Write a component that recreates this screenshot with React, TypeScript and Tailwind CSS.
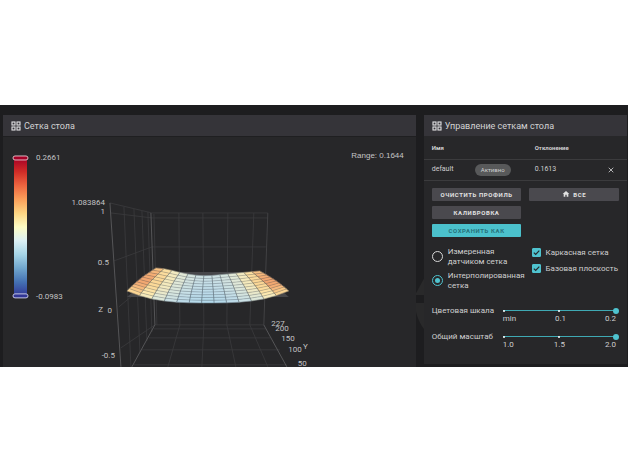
import React, { useState } from 'react';
import { X } from 'lucide-react';
import { MdHome } from 'react-icons/md';

const COLS = 13;
const ROWS = 10;

// RdYlBu stops, used from the lowest to the highest point of the mesh
const PALETTE = [
  [172, 214, 236],
  [198, 223, 232],
  [226, 233, 215],
  [253, 234, 176],
  [250, 208, 140],
  [242, 166, 112],
];

const getColor = (value: number) => {
  const pos = Math.max(0, Math.min(0.999, value)) * (PALETTE.length - 1);
  const i = Math.floor(pos);
  const f = pos - i;
  const c = PALETTE[i].map((v, k) => Math.round(v + (PALETTE[i + 1][k] - v) * f));
  return `rgb(${c[0]},${c[1]},${c[2]})`;
};

// u runs from left to right (-1..1), t from the back edge to the front edge (0..1)
const project = (u: number, t: number) => {
  const a = Math.abs(u);
  const x = 208 + u * (52 + 29 * t + 2 * Math.sin(Math.PI * t));
  const backY = u < 0 ? 276 - 8 * Math.sin((Math.PI / 2) * a * a) : 276 - 5 * a;
  const frontY = 303 - 12 * a * a * a;
  return [x, backY + (frontY - backY) * t];
};

const buildCells = () => {
  const cells = [];
  for (let r = 0; r < ROWS; r++) {
    for (let c = 0; c < COLS; c++) {
      const u0 = -1 + (2 * c) / COLS;
      const u1 = -1 + (2 * (c + 1)) / COLS;
      const t0 = r / ROWS;
      const t1 = (r + 1) / ROWS;
      const u = (u0 + u1) / 2;
      const points = [project(u0, t0), project(u1, t0), project(u1, t1), project(u0, t1)];
      const edge = 0.74 + 0.26 * Math.sin(Math.PI * t0);
      const value = 0.24 - 0.2 * t0 + edge * Math.pow(Math.abs(u), 2);
      cells.push({
        id: `${r}-${c}`,
        points: points.map((p) => p.map((n) => n.toFixed(1)).join(',')).join(' '),
        fill: getColor(value),
      });
    }
  }
  return cells;
};

const toPath = (points: number[][]) => 'M' + points.map((p) => p.map((n) => n.toFixed(1)).join(' ')).join('L');

const steps = (count: number) => Array.from({ length: count + 1 }, (_, i) => i / count);

const cells = buildCells();
const columnLines = steps(COLS).map((c) => toPath(steps(ROWS).map((t) => project(c * 2 - 1, t))));
const rowLines = steps(ROWS).map((t) => toPath(steps(COLS).map((c) => project(c * 2 - 1, t))));

const labels = [
  { text: '1.083864', x: 105, y: 205 },
  { text: '1', x: 105, y: 214 },
  { text: '0.5', x: 109, y: 265 },
  { text: 'Z', x: 103, y: 312 },
  { text: '0', x: 112, y: 313 },
  { text: '-0.5', x: 115, y: 358 },
  { text: '227', x: 285, y: 326 },
  { text: '200', x: 289, y: 331 },
  { text: '150', x: 295, y: 341 },
  { text: '100', x: 302, y: 352 },
  { text: 'Y', x: 308, y: 349 },
  { text: '50', x: 307, y: 366 },
];

const GridIcon: React.FC = () => (
  <svg viewBox="0 0 10 10" className="size-[10px] shrink-0" fill="none" stroke="#e4e4e6" strokeWidth="1.1">
    <rect x="1" y="1" width="3" height="3" />
    <rect x="6" y="1" width="3" height="3" />
    <rect x="1" y="6" width="3" height="3" />
    <rect x="6" y="6" width="3" height="3" />
  </svg>
);

const CardHeader: React.FC<{ title: string }> = ({ title }) => (
  <header className="flex h-[21px] items-center gap-[3px] bg-[#353439] px-2">
    <GridIcon />
    <h2 className="text-[9px] leading-3 text-[#d2d2d3]">{title}</h2>
  </header>
);

const MeshChart: React.FC = () => (
  <svg viewBox="3 137 413 230" className="block w-full" role="img" aria-label="Сетка стола">
    <defs>
      <linearGradient id="scale" x1="0" y1="0" x2="0" y2="1">
        <stop offset="0" stopColor="#a50026" />
        <stop offset="0.1" stopColor="#d02c27" />
        <stop offset="0.2" stopColor="#ee6540" />
        <stop offset="0.3" stopColor="#fb9f5a" />
        <stop offset="0.4" stopColor="#fdd582" />
        <stop offset="0.5" stopColor="#fdfcc4" />
        <stop offset="0.6" stopColor="#dcf0f4" />
        <stop offset="0.7" stopColor="#a6d5e7" />
        <stop offset="0.8" stopColor="#70a6cd" />
        <stop offset="0.9" stopColor="#4471b3" />
        <stop offset="1" stopColor="#313695" />
      </linearGradient>
    </defs>

    <rect x="14" y="158" width="13" height="138" fill="url(#scale)" />
    <rect x="13" y="156" width="15" height="4" rx="2" fill="#a50026" stroke="#dcb9c2" strokeWidth="1" />
    <rect x="13" y="294" width="15" height="4" rx="2" fill="#313695" stroke="#c5c6e2" strokeWidth="1" />

    <g fill="none" stroke="#3b3b3d" strokeWidth="0.8">
      <path d="M110 203L152 213H268M111 213L152 218H268M114 261L152 247H266M119 307L156 276M121 348L155 325" />
      <path d="M124 207L131 367M134 209L140 352M142 211L147 341M148 212L152 332" />
      <path d="M154 214L157 325M179 213L180 325L168 367M203 213L204 325L202 367M228 213L227 325L236 367M254 213L250 325L268 367" />
      <path d="M155 325H264M154 329H266M149 338H271M142 350H280M134 365H287" />
    </g>
    <g fill="none" stroke="#5a5a5c" strokeWidth="0.9">
      <path d="M110 203L121 367M151 213L155 325L132 367M264 325L287 367" />
      <path d="M268 213L264 325" stroke="#444446" />
    </g>

    <path d="M157 272H262L289 297H127Z" fill="#47474a" />
    {cells.map((cell) => (
      <polygon key={cell.id} points={cell.points} fill={cell.fill} stroke={cell.fill} strokeWidth="0.4" />
    ))}
    <g fill="none" stroke="#37424c" strokeWidth="0.5">
      {rowLines.map((d) => (
        <path key={d} d={d} strokeOpacity="0.5" />
      ))}
      {columnLines.map((d) => (
        <path key={d} d={d} strokeOpacity="0.9" />
      ))}
    </g>

    <g fill="#c4c4c5" fontSize="8">
      <text x="36" y="160">0.2661</text>
      <text x="36" y="299">-0.0983</text>
      {labels.map((label) => (
        <text key={label.text} x={label.x} y={label.y} textAnchor="end">{label.text}</text>
      ))}
      <text x="404" y="158" textAnchor="end" fontFamily="Liberation Sans, sans-serif">Range: 0.1644</text>
    </g>
  </svg>
);

const RadioOption: React.FC<{ label: string; checked: boolean; onChange: () => void }> = ({ label, checked, onChange }) => (
  <label className="flex items-center gap-[5px] text-[8px] leading-[10px]">
    <span className="grid shrink-0 place-items-center">
      <input
        type="radio"
        name="mesh"
        checked={checked}
        onChange={onChange}
        className="col-start-1 row-start-1 size-[11px] appearance-none rounded-full border border-[#d8d8d8] checked:border-[#4fc3cf]"
      />
      {checked && <span className="pointer-events-none col-start-1 row-start-1 size-[5px] rounded-full bg-[#4fc3cf]" />}
    </span>
    <span className="w-[76px]">{label}</span>
  </label>
);

const CheckOption: React.FC<{ label: string }> = ({ label }) => (
  <label className="flex items-center gap-[5px] text-[8px] leading-[10px] whitespace-nowrap">
    <span className="grid shrink-0 place-items-center">
      <input
        type="checkbox"
        defaultChecked
        className="peer col-start-1 row-start-1 size-[9px] appearance-none rounded-[1px] border border-[#4fc3cf] checked:bg-[#4fc3cf]"
      />
      <svg viewBox="0 0 9 9" className="pointer-events-none invisible col-start-1 row-start-1 size-[9px] peer-checked:visible">
        <path d="M1.8 4.6L3.7 6.5L7.3 2.6" fill="none" stroke="#24282b" strokeWidth="1.2" />
      </svg>
    </span>
    <span>{label}</span>
  </label>
);

const SliderRow: React.FC<{ id: string; label: string; marks: string[] }> = ({ id, label, marks }) => (
  <div className="flex gap-2">
    <label htmlFor={id} className="w-[63px] shrink-0 text-[8px] leading-[10px] whitespace-nowrap">{label}</label>
    <div className="min-w-0 flex-1 pt-[2px]">
      <div className="grid grid-cols-1 items-center">
        <div className="col-start-1 row-start-1 flex h-px items-center justify-between bg-[#3fa9b3]">
          <span className="size-[2px] rounded-full bg-white" />
          <span className="size-[2px] rounded-full bg-white" />
          <span className="size-[2px] rounded-full bg-white" />
        </div>
        <input
          id={id}
          type="range"
          min="0"
          max="100"
          defaultValue="100"
          className="col-start-1 row-start-1 h-[6px] w-[calc(100%+3px)] min-w-0 appearance-none bg-transparent [&::-webkit-slider-thumb]:size-[6px] [&::-webkit-slider-thumb]:appearance-none [&::-webkit-slider-thumb]:rounded-full [&::-webkit-slider-thumb]:bg-[#4fc3cf]"
        />
      </div>
      <div className="flex justify-between text-[8px] leading-[10px]">
        {marks.map((mark) => (
          <span key={mark}>{mark}</span>
        ))}
      </div>
    </div>
  </div>
);

const buttonClass =
  'flex h-[13px] w-full items-center justify-center gap-[3px] rounded-[1px] bg-[#4a494e] text-[6px] leading-[13px] font-bold tracking-widest text-[#e2e2e2] uppercase';

export default function App() {
  const [mesh, setMesh] = useState('interpolated');

  return (
    <div className="bg-white py-[105px] font-[Roboto,sans-serif]">
      <main className="relative grid grid-cols-[67fr_33fr] items-start gap-2 bg-[#1d1d1f] pt-[10px] pr-px pl-[3px] text-[#cfcfd0]">
        {/* background logo, only seen between the two cards */}
        <svg viewBox="0 0 80 80" className="absolute right-[133px] bottom-[22px] size-[80px]" fill="#29292a">
          <path d="M12 8L24 30H0Z" />
          <path d="M0 38H80C80 60 62 80 40 80C18 80 0 60 0 38Z" />
        </svg>

        <section className="relative min-w-0 bg-[#272729]">
          <CardHeader title="Сетка стола" />
          <div className="border-t border-[#1f1f21]">
            <MeshChart />
          </div>
        </section>

        <section className="relative min-w-0 bg-[#272729] pb-[14px]">
          <CardHeader title="Управление сеткам стола" />
          <table className="w-full table-fixed text-left">
            <thead>
              <tr className="h-[23px] border-b border-[#3b3b3d] text-[6px]">
                <th className="w-[51px] pl-2 font-bold">Имя</th>
                <th className="w-[54px]" />
                <th className="pl-[6px] font-bold">Отклонение</th>
                <th className="w-[20px]" />
              </tr>
            </thead>
            <tbody>
              <tr className="h-[21px] border-b border-[#3b3b3d] text-[7px]">
                <td className="pl-2">default</td>
                <td>
                  <span className="block w-[36px] rounded-full bg-[#58595a] text-center text-[6px] leading-[12px]">Активно</span>
                </td>
                <td className="pl-[6px]">0.1613</td>
                <td>
                  <button type="button" aria-label="Удалить" className="block">
                    <X size={8} strokeWidth={2.5} />
                  </button>
                </td>
              </tr>
            </tbody>
          </table>

          <div className="grid grid-cols-2 items-start gap-2 px-2 pt-[7px]">
            <div className="flex flex-col gap-[5px]">
              <button type="button" className={buttonClass}>Очистить профиль</button>
              <button type="button" className={buttonClass}>Калибровка</button>
              <button
                type="button"
                className="h-[13px] w-full rounded-[1px] bg-[#4bc1cc] text-[6px] leading-[13px] font-bold tracking-widest text-[#27717a] uppercase"
              >
                Сохранить как
              </button>
            </div>
            <button type="button" className={buttonClass}>
              <MdHome size={8} />
              Все
            </button>
          </div>

          <div className="flex items-start justify-between gap-1 pt-[10px] pr-[9px] pl-2">
            <div className="flex flex-col gap-1">
              <RadioOption label="Измеренная датчиком сетка" checked={mesh === 'probed'} onChange={() => setMesh('probed')} />
              <RadioOption label="Интерполированная сетка" checked={mesh === 'interpolated'} onChange={() => setMesh('interpolated')} />
            </div>
            <div className="flex flex-col gap-[6px] pt-px">
              <CheckOption label="Каркасная сетка" />
              <CheckOption label="Базовая плоскость" />
            </div>
          </div>

          <div className="flex flex-col gap-[8px] pt-[15px] pr-[11px] pl-2">
            <SliderRow id="color-scale" label="Цветовая шкала" marks={['min', '0.1', '0.2']} />
            <SliderRow id="box-scale" label="Общий масштаб" marks={['1.0', '1.5', '2.0']} />
          </div>
        </section>
      </main>
    </div>
  );
}
